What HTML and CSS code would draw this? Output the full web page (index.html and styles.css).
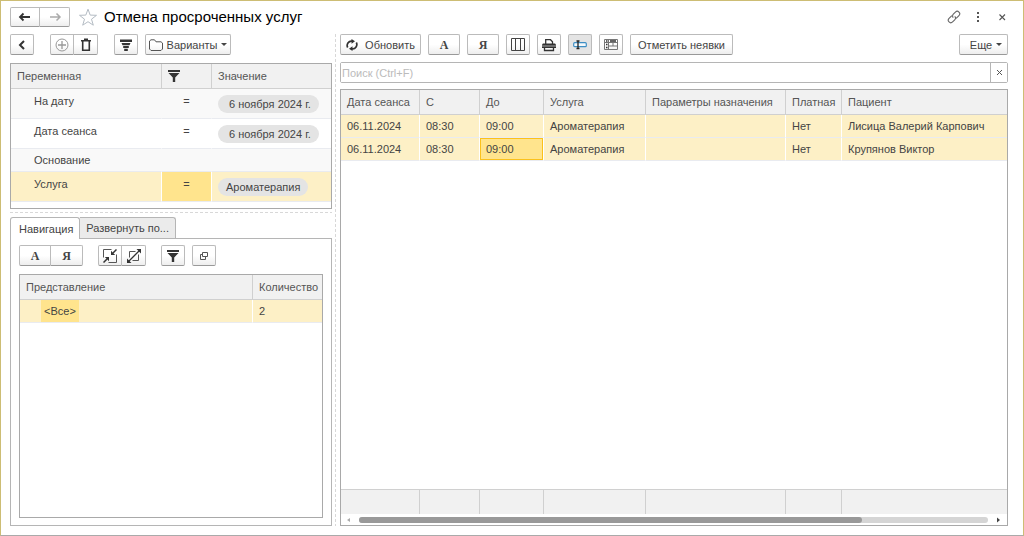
FILE: index.html
```html
<!DOCTYPE html>
<html lang="ru">
<head>
<meta charset="utf-8">
<title>Отмена просроченных услуг</title>
<link rel="stylesheet" href="styles.css">
</head>
<body>
<div class="window">
  <header class="titlebar">
    <div class="group">
      <button class="btn nav" aria-label="Назад"><svg width="14" height="10" viewBox="0 0 14 10"><path d="M2 5h10" stroke="#333" stroke-width="2"/><path d="M5.500 1.500L2 5l3.500 3.500" fill="none" stroke="#333" stroke-width="1.800"/></svg></button>
      <button class="btn nav" aria-label="Вперед"><svg width="14" height="10" viewBox="0 0 14 10"><path d="M2 5h10M8.500 1.500L12 5 8.500 8.500" fill="none" stroke="#aaa" stroke-width="1.500"/></svg></button>
    </div>
    <button class="plain" aria-label="В избранное"><svg width="20" height="18" viewBox="0 0 20 18"><path d="M10 1.200l2.200 5.900 6.300.2-5 3.900 1.800 6-5.300-3.500-5.300 3.500 1.800-6-5-3.900 6.300-.2z" fill="#fff" stroke="#b4bcc4"/></svg></button>
    <h1>Отмена просроченных услуг</h1>
    <div class="window-tools">
      <button class="plain" aria-label="Ссылка"><svg width="14" height="14" viewBox="0 0 14 14"><g transform="rotate(-45 7 7)" fill="none" stroke="#666" stroke-width="1.100"><path d="M6.500 4.500H2.500a2.500 2.500 0 000 5H5.500A2.500 2.500 0 008 7"/><path d="M7.500 9.500h4a2.500 2.500 0 000-5H8.500A2.500 2.500 0 006 7"/></g></svg></button>
      <button class="plain" aria-label="Меню"><svg width="14" height="14" viewBox="0 0 14 14"><path d="M6 2h2v2H6zM6 6h2v2H6zM6 10h2v2H6z" fill="#555"/></svg></button>
      <button class="plain" aria-label="Закрыть"><svg width="14" height="14" viewBox="0 0 14 14"><path d="M4.500 4.500l5.500 5.500M10 4.500L4.500 10" stroke="#555" stroke-width="1.100"/></svg></button>
    </div>
  </header>

  <main class="columns">
    <section class="left">
      <div class="toolbar">
        <button class="btn icon" aria-label="Свернуть"><svg width="14" height="14" viewBox="0 0 14 14"><path d="M9 3L5 7l4 4" fill="none" stroke="#333" stroke-width="2"/></svg></button>
        <div class="group gap-before">
          <button class="btn icon" aria-label="Добавить"><svg width="14" height="14" viewBox="0 0 14 14"><circle cx="7" cy="7" r="6" fill="none" stroke="#999"/><path d="M7 3v8M3 7h8" stroke="#999" stroke-width="1.300"/></svg></button>
          <button class="btn icon" aria-label="Удалить"><svg width="14" height="14" viewBox="0 0 14 14"><path d="M2 2.700h10M5 1.200h4M3.700 3v9.300h6.600V3" fill="none" stroke="#333" stroke-width="1.600"/></svg></button>
        </div>
        <button class="btn icon gap-before" aria-label="Отбор"><svg width="14" height="14" viewBox="0 0 14 14"><path d="M1 1.500h12V4H1zM2.500 5h9l-1 2.200h-7zM4.200 8h5.600v2H4.200zM5.200 10.800h3.600V13H5.200z" fill="#333"/></svg></button>
        <button class="btn variants"><svg width="14" height="12" viewBox="0 0 14 12"><path d="M.5 10V2L2 .8h3.500l1.500 2h5L13.500 4v6L12 11.500H2z" fill="none" stroke="#555"/></svg>Варианты<i class="caret"></i></button>
      </div>

      <div class="frame filters">
        <table class="grid">
          <colgroup><col class="f-name"><col class="f-op"><col></colgroup>
          <thead><tr><th>Переменная</th><th><svg class="funnel" width="12" height="12" viewBox="0 0 12 12" role="img" aria-label="Отбор"><path d="M0 0h12v2H0zM.5 3h11L7.200 7.500V12H4.800V7.500z" fill="#333"/></svg></th><th>Значение</th></tr></thead>
          <tbody>
            <tr class="tall alt"><td>На дату</td><td class="op">=</td><td><span class="pill date">6 ноября 2024 г.</span></td></tr>
            <tr class="tall"><td>Дата сеанса</td><td class="op">=</td><td><span class="pill date">6 ноября 2024 г.</span></td></tr>
            <tr class="alt"><td>Основание</td><td></td><td></td></tr>
            <tr class="tall selected"><td>Услуга</td><td class="op current">=</td><td><span class="pill">Ароматерапия</span></td></tr>
          </tbody>
        </table>
      </div>

      <div class="split-h"></div>

      <div class="tabs" role="tablist">
        <button class="tab active" role="tab" aria-selected="true">Навигация</button>
        <button class="tab" role="tab" aria-selected="false">Развернуть по...</button>
      </div>
      <div class="panel" role="tabpanel">
        <div class="toolbar spaced">
          <div class="group">
            <button class="btn letter">А</button>
            <button class="btn letter">Я</button>
          </div>
          <div class="group">
            <button class="btn icon" aria-label="Свернуть все"><svg width="14" height="14" viewBox="0 0 14 14"><path d="M8.500.5h-8v8M13.500 5.500v8h-8" fill="none" stroke="#555"/><path d="M13.500.5L10 4M.5 13.500L4 10" stroke="#333" stroke-width="1.500"/><path d="M8 1.800V6h4.200zM6 12.200V8H1.800z" fill="#333"/></svg></button>
            <button class="btn icon" aria-label="Развернуть все"><svg width="14" height="14" viewBox="0 0 14 14"><path d="M8.500 2.500h-6v6M11.500 5.500v6h-6" fill="none" stroke="#555"/><path d="M12.500 1.500l-11 11" stroke="#333" stroke-width="1.300"/><path d="M9.500 0H14v4.500zM4.500 14H0V9.500z" fill="#333"/></svg></button>
          </div>
          <button class="btn icon" aria-label="Отбор"><svg width="12" height="12" viewBox="0 0 12 12"><path d="M0 0h12v2H0zM.5 3h11L7.200 7.500V12H4.800V7.500z" fill="#333"/></svg></button>
          <button class="btn icon near" aria-label="В новом окне"><svg width="10" height="10" viewBox="0 0 10 10"><path d="M3.500 1.500h5v4h-5zM3 3.500H1.500v5h5V6" fill="none" stroke="#555"/></svg></button>
        </div>
        <div class="frame fill">
          <table class="grid navigation">
            <colgroup><col><col class="n-count"></colgroup>
            <thead><tr><th>Представление</th><th>Количество</th></tr></thead>
            <tbody><tr class="selected"><td><span class="mark">&lt;Все&gt;</span></td><td>2</td></tr></tbody>
          </table>
        </div>
      </div>
    </section>

    <div class="split-v"></div>

    <section class="right">
      <div class="toolbar">
        <button class="btn refresh"><svg width="12" height="12" viewBox="0 0 12 12"><path d="M1.700 8.500A4.300 4.300 0 016 2.200M10.300 3.500A4.300 4.300 0 016 9.800" fill="none" stroke="#333" stroke-width="1.700"/><path d="M5.500 0L9 2.300 5.500 4.700zM6.500 7.300L3 9.700 6.500 12z" fill="#333"/></svg>Обновить</button>
        <button class="btn letter">А</button>
        <button class="btn letter">Я</button>
        <button class="btn icon" aria-label="Колонки"><svg width="14" height="14" viewBox="0 0 14 14"><path d="M.5.500h13v12H.5zM4.500.500v12M9.500.500v12" fill="none" stroke="#444"/></svg></button>
        <button class="btn icon" aria-label="Печать"><svg width="14" height="14" viewBox="0 0 14 14"><path d="M3.700 6V1.700h4.800l2 2V6" fill="none" stroke="#333" stroke-width="1.300"/><path d="M1 5.500h12l1 1V10H0V6.500z" fill="#333"/><path d="M0 8h14" stroke="#ccc" stroke-width=".8"/><path d="M2.500 9.500v3h9v-3" fill="none" stroke="#333" stroke-width="1.300"/></svg></button>
        <button class="btn icon pressed" aria-label="Поле ввода"><svg width="14" height="12" viewBox="0 0 14 12"><rect x=".7" y="3.700" width="12.600" height="4" rx="1" fill="#f4f9fc" stroke="#3f8fc4" stroke-width="1.200"/><path d="M3.500 2h3M3.500 9.500h3M5 2v7.500" stroke="#222" stroke-width="1.300"/></svg></button>
        <button class="btn icon" aria-label="Таблица"><svg width="14" height="12" viewBox="0 0 14 12"><path d="M.5.500h13v10H.5zM4.500.500v10M.5 3.500h13M4.500 7h9M9 3.500V7" fill="none" stroke="#777"/><path d="M2 2h1.500M6 2h6M2 5.500h1.500M2 8.500h1.500" stroke="#333" stroke-width="1.300"/></svg></button>
        <button class="btn absent">Отметить неявки</button>
        <button class="btn more">Еще<i class="caret"></i></button>
      </div>
      <div class="search">
        <input type="text" placeholder="Поиск (Ctrl+F)" aria-label="Поиск">
        <button class="clear" aria-label="Очистить"><svg width="7" height="7" viewBox="0 0 7 7"><path d="M1 1l5 5M6 1L1 6" stroke="#555"/></svg></button>
      </div>
      <div class="frame fill">
        <table class="grid sessions">
          <colgroup><col class="s-date"><col class="s-from"><col class="s-to"><col class="s-service"><col class="s-params"><col class="s-paid"><col></colgroup>
          <thead><tr><th>Дата сеанса</th><th>С</th><th>До</th><th>Услуга</th><th>Параметры назначения</th><th>Платная</th><th>Пациент</th></tr></thead>
          <tbody>
            <tr class="selected"><td>06.11.2024</td><td>08:30</td><td>09:00</td><td>Ароматерапия</td><td></td><td>Нет</td><td>Лисица Валерий Карпович</td></tr>
            <tr class="selected"><td>06.11.2024</td><td>08:30</td><td class="focus">09:00</td><td>Ароматерапия</td><td></td><td>Нет</td><td>Крупянов Виктор</td></tr>
          </tbody>
        </table>
        <div class="space"></div>
        <table class="grid totals">
          <colgroup><col class="s-date"><col class="s-from"><col class="s-to"><col class="s-service"><col class="s-params"><col class="s-paid"><col></colgroup>
          <tbody><tr><td></td><td></td><td></td><td></td><td></td><td></td><td></td></tr></tbody>
        </table>
        <div class="scroll">
          <svg width="4" height="6" viewBox="0 0 4 6"><path d="M4 1v4L1 3z" fill="#aaa"/></svg>
          <div class="track"><div class="thumb"></div></div>
          <svg width="4" height="6" viewBox="0 0 4 6"><path d="M0 .5v5L3 3z" fill="#444"/></svg>
        </div>
      </div>
    </section>
  </main>
</div>
</body>
</html>
```
FILE: styles.css
```css
* { box-sizing: border-box; }

body {
  margin: 0;
  font: 11px/14px "Liberation Sans", Arial, sans-serif;
  color: #444;
  background: #fff;
}

button, input { font: inherit; color: inherit; }
button { padding: 0; }
svg { display: block; flex: none; }

.window {
  display: flex;
  flex-direction: column;
  height: 100vh;
  border: 1px solid #cdbd74;
  border-bottom-color: #aaa;
}

.titlebar {
  display: flex;
  align-items: center;
  padding: 6px 14px 0 9px;
}

h1 {
  flex: 1;
  margin: 0 0 0 6px;
  font-size: 15px;
  font-weight: normal;
  line-height: 20px;
  color: #000;
}

.plain {
  display: flex;
  border: 0;
  background: none;
}

.titlebar > .plain { margin-left: 8px; }
.window-tools { display: flex; gap: 10px; }

.group { display: flex; }

.btn {
  display: flex;
  align-items: center;
  justify-content: center;
  height: 21px;
  border: 1px solid #bbb;
  border-bottom-color: #999;
  border-radius: 2px;
  background: linear-gradient(#fff 50%, #eee);
  white-space: nowrap;
}

.group .btn:first-child { border-radius: 2px 0 0 2px; }
.group .btn:last-child { border-left: 0; border-radius: 0 2px 2px 0; }
.nav { width: 30px; height: 20px; }
.icon { width: 24px; }

.letter {
  width: 32px;
  font: bold 12px/14px "Liberation Serif", "Times New Roman", serif;
}

.pressed { background: #e4e4e4; }

.caret {
  border: 3px solid transparent;
  border-top-color: #444;
  border-bottom: 0;
}

.columns {
  display: flex;
  flex: 1;
  min-height: 0;
  padding: 7px 15px 9px 9px;
}

.left, .right {
  display: flex;
  flex-direction: column;
  min-width: 0;
}

.left { flex: 0 0 322px; }
.right { flex: 1; }

.split-v {
  width: 1px;
  margin: 0 4px 0 3px;
  background: repeating-linear-gradient(#d8d8d8 0 3px, #fff 3px 5px);
}

.split-h {
  flex: none;
  height: 1px;
  margin: 3px 0 4px;
  background: repeating-linear-gradient(90deg, #d8d8d8 0 3px, #fff 3px 5px);
}

.toolbar { display: flex; align-items: center; }
.gap-before { margin-left: 16px; }
.variants { gap: 4px; width: 86px; margin-left: 7px; }

.frame {
  display: flex;
  flex-direction: column;
  border: 1px solid #a9a9a9;
}

.fill { flex: 1; min-height: 0; }

.filters { height: 146px; margin-top: 8px; }

.grid {
  width: 100%;
  table-layout: fixed;
  border-collapse: separate;
  border-spacing: 0;
}

th, td {
  height: 23px;
  padding: 0 0 0 6px;
  border-right: 1px solid #fff;
  text-align: left;
  font-weight: normal;
  white-space: nowrap;
}

th {
  height: 25px;
  border-right-color: #d0d0d0;
  border-bottom: 1px solid #d0d0d0;
  background: #f1f1f1;
  color: #555;
}

td { border-bottom: 1px solid #e9ebf0; }
th:last-child, td:last-child { border-right: 0; }
.selected td { background: #fdf0c6; }

.f-name { width: 151px; }
.f-op { width: 50px; }
.filters td:first-child { padding-left: 23px; }
.filters .alt td { background: #f9f9f9; border-right-color: #f9f9f9; }
.filters .tall td { height: 30px; }
.filters .tall td:not(:last-child) { padding-bottom: 6px; }
.filters .tall .op { padding: 0 0 8px; text-align: center; }
.filters .selected .current { background: #ffe48d; }

.pill {
  display: block;
  width: fit-content;
  padding: 2px 8px;
  border-radius: 9px;
  background: #e4e4e4;
}

.date { padding-left: 11px; }

.tabs { display: flex; }

.tab {
  height: 22px;
  padding: 0 6px;
  border: 1px solid #b5b5b5;
  border-bottom: 0;
  border-left: 0;
  border-radius: 0 3px 0 0;
  background: #ebebeb;
}

.active {
  z-index: 1;
  height: 22px;
  padding-left: 8px;
  border-left: 1px solid #b5b5b5;
  border-radius: 3px 3px 0 0;
  background: #fff;
}

.tabs { margin-bottom: -1px; }
.tab:not(.active) { height: 21px; }

.panel {
  display: flex;
  flex: 1;
  flex-direction: column;
  min-height: 0;
  padding: 6px 8px 7px;
  border: 1px solid #b5b5b5;
}

.spaced { gap: 15px; margin-bottom: 8px; }
.spaced .near { margin-left: -8px; }
.n-count { width: 69px; }
.navigation td:first-child { padding-left: 21px; }

.mark {
  display: block;
  width: fit-content;
  padding: 4px 3px;
  background: #ffe48d;
}

.right .toolbar { gap: 7px; }
.refresh { gap: 7px; width: 81px; }
.absent { width: 103px; }
.more { gap: 4px; width: 49px; margin-left: auto; padding-left: 5px; }

.search {
  display: flex;
  height: 21px;
  margin: 7px 0 6px;
  border: 1px solid #b5b5b5;
  border-radius: 2px;
}

.search input {
  flex: 1;
  min-width: 0;
  padding: 0 1px;
  border: 0;
}

.search input::placeholder { color: #bbb; }

.clear {
  display: flex;
  align-items: center;
  justify-content: center;
  width: 17px;
  border: 0;
  border-left: 1px solid #b5b5b5;
  background: #fff;
}

.s-date { width: 79px; }
.s-from { width: 60px; }
.s-to { width: 64px; }
.s-service { width: 102px; }
.s-params { width: 140px; }
.s-paid { width: 56px; }

.sessions .focus {
  background: #ffe48d;
  box-shadow: inset 0 0 0 1px #fbc11b;
}

.space { flex: 1; }

.totals td {
  height: 25px;
  border-top: 1px solid #d0d0d0;
  border-right-color: #d0d0d0;
  border-bottom: 0;
  background: #f1f1f1;
}

.scroll {
  display: flex;
  flex: none;
  align-items: center;
  gap: 9px;
  height: 11px;
  padding: 0 6px 0 5px;
}

.track {
  flex: 1;
  height: 6px;
  border-radius: 3px;
  background: #d5d5d5;
}

.thumb {
  width: 80%;
  height: 6px;
  border-radius: 3px;
  background: #999;
}
```
